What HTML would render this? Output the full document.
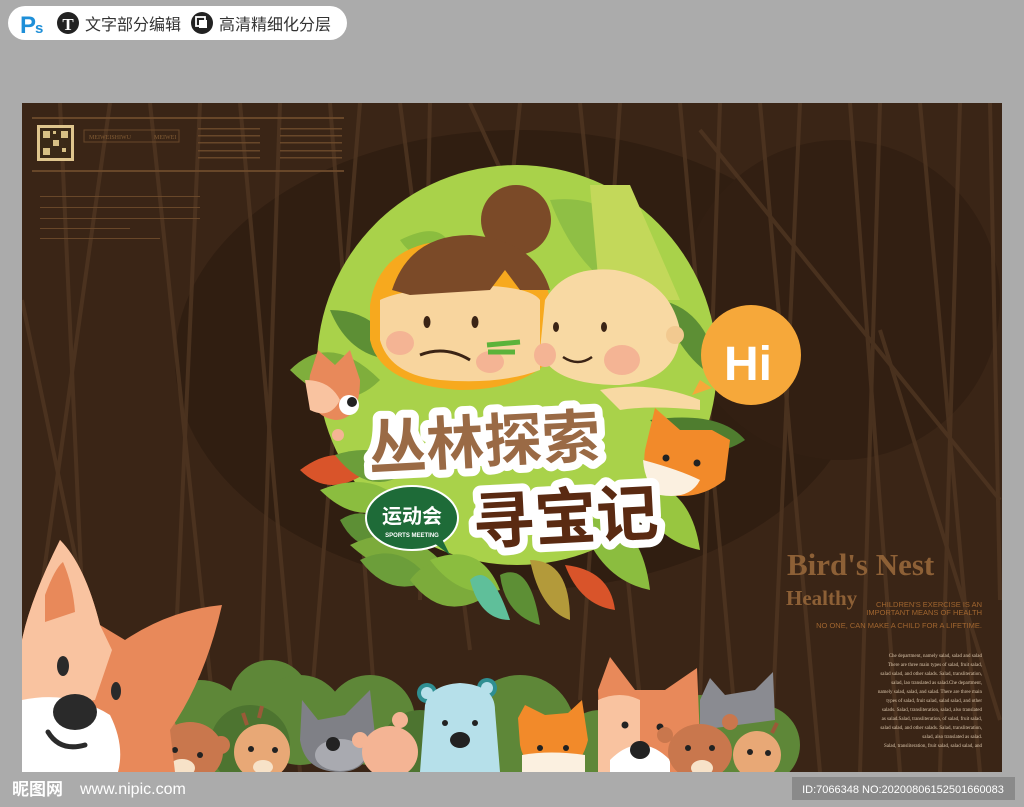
<!DOCTYPE html>
<html><head><meta charset="utf-8"><style>
html,body{margin:0;padding:0;width:1024px;height:807px;overflow:hidden;background:#ababab;font-family:"Liberation Sans","Noto Sans CJK SC",sans-serif}
</style></head><body>
<svg width="1024" height="807" viewBox="0 0 1024 807" xmlns="http://www.w3.org/2000/svg" style="position:absolute;left:0;top:0">
<rect x="8" y="6" width="339" height="34" rx="17" fill="#fff"/>
<text x="20" y="33" font-family="Liberation Sans,sans-serif" font-weight="bold" font-size="24" fill="#1e8fd8">P</text>
<text x="35" y="33" font-family="Liberation Sans,sans-serif" font-weight="bold" font-size="15" fill="#1e8fd8">s</text>
<circle cx="68" cy="23" r="11" fill="#222"/>
<text x="68" y="30" text-anchor="middle" font-family="Liberation Serif,serif" font-weight="bold" font-size="17" fill="#fff">T</text>
<text x="85" y="30" font-family="Noto Sans CJK SC,sans-serif" font-size="16" fill="#333">文字部分编辑</text>
<circle cx="202" cy="23" r="11" fill="#222"/>
<rect x="196" y="17" width="9" height="9" fill="none" stroke="#fff" stroke-width="1.8"/>
<rect x="199" y="20" width="8" height="8" fill="#fff"/>
<text x="219" y="30" font-family="Noto Sans CJK SC,sans-serif" font-size="16" fill="#333">高清精细化分层</text>

<defs><clipPath id="pc"><rect x="22" y="103" width="980" height="669"/></clipPath></defs>
<g clip-path="url(#pc)">
<rect x="22" y="103" width="980" height="669" fill="#3a2516"/>
<ellipse cx="520" cy="360" rx="345" ry="230" fill="#301e11"/>
<circle cx="840" cy="300" r="160" fill="#321f12"/>
<g stroke="#4e3521" stroke-width="4" opacity="0.85">
<line x1="60" y1="103" x2="90" y2="772"/><line x1="110" y1="103" x2="40" y2="600"/><line x1="150" y1="103" x2="220" y2="772"/>
<line x1="200" y1="103" x2="170" y2="772"/><line x1="240" y1="103" x2="300" y2="772"/><line x1="280" y1="103" x2="260" y2="700"/>
<line x1="330" y1="103" x2="380" y2="772"/><line x1="360" y1="103" x2="310" y2="720"/><line x1="400" y1="103" x2="470" y2="650"/>
<line x1="430" y1="103" x2="420" y2="600"/><line x1="470" y1="103" x2="560" y2="300"/><line x1="520" y1="103" x2="500" y2="300"/>
<line x1="580" y1="103" x2="640" y2="700"/><line x1="620" y1="103" x2="580" y2="700"/><line x1="680" y1="103" x2="740" y2="772"/>
<line x1="720" y1="103" x2="700" y2="700"/><line x1="760" y1="103" x2="820" y2="772"/><line x1="800" y1="103" x2="770" y2="772"/>
<line x1="850" y1="103" x2="900" y2="772"/><line x1="880" y1="103" x2="860" y2="772"/><line x1="920" y1="103" x2="980" y2="772"/>
<line x1="960" y1="103" x2="940" y2="772"/><line x1="990" y1="103" x2="1000" y2="600"/><line x1="22" y1="300" x2="120" y2="772"/>
<line x1="880" y1="330" x2="1000" y2="720"/><line x1="700" y1="130" x2="1000" y2="500"/>
</g>
<g fill="#6e4b2c" opacity="0.9">
<rect x="32" y="117" width="312" height="2"/><rect x="32" y="170" width="312" height="2"/>
<rect x="37" y="125" width="37" height="36" fill="#f1d79a"/>
<rect x="40" y="128" width="31" height="30" fill="#3a2a18"/>
<g fill="#e8d090"><rect x="43" y="131" width="7" height="7"/><rect x="61" y="131" width="7" height="7"/><rect x="43" y="148" width="7" height="7"/><rect x="53" y="140" width="6" height="6"/><rect x="62" y="148" width="4" height="4"/><rect x="53" y="131" width="3" height="3"/></g>
<rect x="84" y="130" width="95" height="12" fill="none" stroke="#6e4b2c"/>
<text x="89" y="139" font-size="6" font-family="Liberation Serif,serif" fill="#8a6238">MEIWEISHIWU</text>
<text x="154" y="139" font-size="6" font-family="Liberation Serif,serif" fill="#8a6238">MEIWEI</text>
<rect x="198" y="128" width="62" height="1.5"/><rect x="198" y="135" width="62" height="1.5"/><rect x="198" y="142" width="62" height="1.5"/>
<rect x="198" y="150" width="62" height="1.5"/><rect x="198" y="157" width="62" height="1.5"/>
<rect x="280" y="128" width="62" height="1.5"/><rect x="280" y="135" width="62" height="1.5"/><rect x="280" y="142" width="62" height="1.5"/>
<rect x="280" y="150" width="62" height="1.5"/><rect x="280" y="157" width="62" height="1.5"/>
<rect x="40" y="196" width="160" height="1"/><rect x="40" y="207" width="160" height="1"/><rect x="40" y="218" width="160" height="1"/>
<rect x="40" y="228" width="90" height="1"/><rect x="40" y="238" width="120" height="1"/>
</g>

<text x="787" y="575" font-family="Liberation Serif,serif" font-weight="bold" font-size="31" fill="#8d6036">Bird's Nest</text>
<text x="786" y="605" font-family="Liberation Serif,serif" font-weight="bold" font-size="21" fill="#8d6036">Healthy</text>
<g font-family="Liberation Sans,sans-serif" font-size="7.5" fill="#a0652f" text-anchor="end">
<text x="982" y="607">CHILDREN'S EXERCISE IS AN</text>
<text x="982" y="615">IMPORTANT MEANS OF HEALTH</text>
<text x="982" y="628">NO ONE, CAN MAKE A CHILD FOR A LIFETIME.</text>
</g>
<g font-family="Liberation Serif,serif" font-size="5" fill="#d9c4aa" text-anchor="end">
<text x="982" y="657">Che department, namely salad, salad and salad</text>
<text x="982" y="666">There are three main types of salad, fruit salad,</text>
<text x="982" y="675">salad salad, and other salads. Salad, transliteration,</text>
<text x="982" y="684">salad, lao translated as salad.Che department,</text>
<text x="982" y="693">namely salad, salad, and salad. There are three main</text>
<text x="982" y="702">types of salad, fruit salad, salad salad, and other</text>
<text x="982" y="711">salads. Salad, transliteration, salad, also translated</text>
<text x="982" y="720">as salad.Salad, transliteration, of salad, fruit salad,</text>
<text x="982" y="729">salad salad, and other salads. Salad, transliteration,</text>
<text x="982" y="738">salad, also translated as salad.</text>
<text x="982" y="747">Salad, transliteration, fruit salad, salad salad, and</text>
</g>

<circle cx="517" cy="365" r="200" fill="#a9d24a"/>
<g>
<path d="M290 370 Q330 330 380 380 Q340 420 290 370Z" fill="#7fae3c"/>
<path d="M300 470 Q340 440 370 470 Q330 500 300 470Z" fill="#d9542a"/>
<path d="M320 490 Q370 470 400 500 Q360 530 320 490Z" fill="#8bbd3f"/>
<path d="M335 455 Q380 440 410 470 Q370 500 335 455Z" fill="#6c9e3a"/>
<path d="M340 520 Q370 500 400 540 Q360 560 340 520Z" fill="#5d8f35"/>
<path d="M350 545 Q400 520 440 560 Q400 590 350 545Z" fill="#7cab3b"/>
<path d="M360 560 Q400 540 430 580 Q390 600 360 560Z" fill="#6c9e3a"/>
<path d="M410 580 Q440 540 480 600 Q440 620 410 580Z" fill="#7cab3b"/>
<path d="M430 560 Q480 540 500 590 Q460 600 430 560Z" fill="#8bbd3f"/>
<path d="M470 580 Q490 560 510 620 Q480 620 470 580Z" fill="#5fbf9a"/>
<path d="M500 575 Q530 560 540 625 Q505 615 500 575Z" fill="#5d8f35"/>
<path d="M530 560 Q570 560 570 620 Q540 610 530 560Z" fill="#b39a3a"/>
<path d="M565 565 Q610 570 615 610 Q580 605 565 565Z" fill="#d9542a"/>
<path d="M580 520 Q640 510 650 590 Q600 580 580 520Z" fill="#8bbd3f"/>
<path d="M630 480 Q690 480 700 550 Q650 540 630 480Z" fill="#98c640"/>
<path d="M650 420 Q720 410 745 440 Q700 470 650 420Z" fill="#4f7d2f"/>
<path d="M660 300 Q710 310 720 380 Q680 360 660 300Z" fill="#5d8f35"/>
<path d="M550 200 Q640 190 640 300 Q580 280 550 200Z" fill="#8fbf45"/>
<path d="M590 185 L630 185 L680 300 L600 300Z" fill="#c3d85a"/>
<path d="M330 310 Q380 310 400 360 Q350 360 330 310Z" fill="#5d8f35"/>
<path d="M400 240 Q440 220 450 245 Q420 270 400 240Z" fill="#8bbd3f"/>
</g>
<circle cx="516" cy="220" r="35" fill="#7b4a28"/>
<path d="M370 305 Q380 240 460 240 Q540 240 550 300 L550 360 Q520 390 460 390 Q380 385 370 340Z" fill="#f7a91e"/>
<path d="M380 300 Q400 290 460 285 Q530 285 540 300 L540 370 Q500 385 440 380 Q390 375 380 340Z" fill="#f8d59e"/>
<path d="M392 290 Q410 235 470 235 Q535 240 550 290 L520 290 L505 270 L490 290 L410 295Z" fill="#7b4a28"/>
<ellipse cx="427" cy="322" rx="3.5" ry="6" fill="#3b2415"/>
<ellipse cx="475" cy="322" rx="3.5" ry="6" fill="#3b2415"/>
<path d="M420 355 Q445 345 470 360" stroke="#3b2415" stroke-width="3" fill="none"/>
<ellipse cx="400" cy="343" rx="14" ry="12" fill="#f4b494"/>
<ellipse cx="490" cy="362" rx="14" ry="11" fill="#f4b494"/>
<path d="M487 345 L520 342 M488 352 L515 352" stroke="#5bb33a" stroke-width="5"/>
<path d="M545 300 Q565 265 615 270 Q670 280 680 330 Q680 380 620 385 Q550 385 540 350Z" fill="#f8d9a3"/>
<circle cx="675" cy="335" r="9" fill="#f2c990"/>
<ellipse cx="556" cy="327" rx="3" ry="5" fill="#3b2415"/>
<ellipse cx="604" cy="327" rx="3" ry="5" fill="#3b2415"/>
<path d="M563 357 Q578 367 592 357" stroke="#3b2415" stroke-width="2.5" fill="none"/>
<ellipse cx="545" cy="355" rx="11" ry="12" fill="#f4b494"/>
<ellipse cx="622" cy="360" rx="18" ry="15" fill="#f4b494"/>
<path d="M600 390 Q650 380 700 400 L700 410 Q650 405 620 410Z" fill="#f8d9a3"/>
<circle cx="751" cy="355" r="50" fill="#f6a83a"/>
<path d="M700 380 L692 395 L712 388Z" fill="#f6a83a"/>
<text x="748" y="380" text-anchor="middle" font-family="Liberation Sans,sans-serif" font-weight="bold" font-size="48" fill="#fff">Hi</text>
<path d="M310 375 L318 350 L335 365 L350 350 L360 380 Q360 420 335 420 Q305 415 310 375Z" fill="#e8895a"/>
<path d="M305 380 Q330 380 340 400 Q330 420 310 410Z" fill="#f9c3a0"/>
<circle cx="349" cy="405" r="10" fill="#fff"/><circle cx="352" cy="402" r="5" fill="#222"/>
<circle cx="338" cy="435" r="6" fill="#f4b494"/>
<path d="M645 450 L655 408 L680 430 L712 430 L730 440 L725 480 Q700 500 670 495 Q640 485 645 450Z" fill="#f28a2a"/>
<path d="M643 460 Q680 470 700 480 Q690 500 660 495 Q645 485 643 460Z" fill="#fbf0e0"/>
<circle cx="666" cy="458" r="3.5" fill="#222"/><circle cx="697" cy="463" r="3.5" fill="#222"/>
<g font-family="Noto Sans CJK SC,WenQuanYi Zen Hei,sans-serif" font-weight="bold" stroke="#fff" stroke-linejoin="round" paint-order="stroke">
<text x="368" y="462" font-size="58" fill="#9a6a45" stroke-width="16" transform="rotate(-3 490 440)">丛林探索</text>
<text x="472" y="540" font-size="62" fill="#5a2a12" stroke-width="16" transform="rotate(-3 550 510)">寻宝记</text>
</g>
<ellipse cx="412" cy="518" rx="46" ry="32" fill="#1e6b38" stroke="#fff" stroke-width="2"/>
<path d="M430 540 L450 555 L440 535Z" fill="#1e6b38"/>
<text x="412" y="523" text-anchor="middle" font-family="Noto Sans CJK SC,sans-serif" font-weight="bold" font-size="20" fill="#fff">运动会</text>
<text x="412" y="537" text-anchor="middle" font-family="Liberation Sans,sans-serif" font-weight="bold" font-size="6" fill="#fff">SPORTS MEETING</text>

<g fill="#5e8738">
<circle cx="200" cy="730" r="50"/><circle cx="270" cy="700" r="40"/><circle cx="300" cy="720" r="45"/>
<circle cx="370" cy="720" r="45"/><circle cx="520" cy="730" r="55"/><circle cx="600" cy="750" r="40"/>
<circle cx="700" cy="740" r="45"/><circle cx="760" cy="745" r="40"/>
</g>
<g fill="#4d7430"><circle cx="250" cy="745" r="40"/><circle cx="420" cy="750" r="40"/><circle cx="660" cy="760" r="40"/></g>
<circle cx="167" cy="727" r="9" fill="#c9774d"/><circle cx="221" cy="745" r="9" fill="#c9774d"/>
<ellipse cx="190" cy="752" rx="33" ry="30" fill="#c9774d"/>
<ellipse cx="182" cy="768" rx="13" ry="9" fill="#f7e2c8"/>
<circle cx="175" cy="750" r="3" fill="#222"/><circle cx="200" cy="755" r="3" fill="#222"/>
<path d="M247 725 l-4 -12 M259 718 l3 -12" stroke="#9a5a38" stroke-width="4"/>
<ellipse cx="262" cy="752" rx="28" ry="28" fill="#e8a876"/>
<ellipse cx="263" cy="767" rx="10" ry="7" fill="#f7e2c8"/>
<circle cx="251" cy="749" r="3" fill="#222"/><circle cx="275" cy="750" r="3" fill="#222"/>
<path d="M302 700 L318 720 L345 715 L370 690 L375 735 Q370 772 340 772 Q305 772 300 740Z" fill="#7f8086"/>
<ellipse cx="340" cy="755" rx="25" ry="16" fill="#a9aab0"/>
<circle cx="333" cy="744" r="7" fill="#222"/>
<circle cx="360" cy="740" r="8" fill="#f4b494"/><circle cx="400" cy="720" r="8" fill="#f4b494"/>
<ellipse cx="390" cy="752" rx="28" ry="26" fill="#f4b494"/>
<circle cx="427" cy="693" r="10" fill="#2f8f92"/><circle cx="487" cy="688" r="10" fill="#2f8f92"/>
<circle cx="427" cy="693" r="6" fill="#b6e0ea"/><circle cx="487" cy="688" r="6" fill="#b6e0ea"/>
<path d="M425 705 Q430 685 460 683 Q495 685 495 710 L500 772 L420 772Z" fill="#b6e0ea"/>
<circle cx="445" cy="723" r="3" fill="#222"/><circle cx="475" cy="723" r="3" fill="#222"/>
<ellipse cx="460" cy="740" rx="10" ry="8" fill="#222"/>
<path d="M518 718 L525 705 L545 715 L568 713 L582 700 L588 740 Q580 772 555 772 Q525 772 520 745Z" fill="#f28a2a"/>
<path d="M522 755 Q550 750 585 755 L585 772 L522 772Z" fill="#fbf0e0"/>
<circle cx="540" cy="748" r="3" fill="#222"/><circle cx="566" cy="748" r="3" fill="#222"/>
<path d="M700 700 L710 678 L725 695 L755 690 L773 672 L775 720 L700 730Z" fill="#8a8b91"/>
<path d="M598 690 L610 657 L635 690 L665 690 L697 668 L700 740 L700 772 L600 772Z" fill="#e8895a"/>
<path d="M598 700 Q620 690 640 700 L640 772 L598 772Z" fill="#f9c3a0"/>
<path d="M610 760 Q640 730 670 760 L670 772 L610 772Z" fill="#fff"/>
<ellipse cx="640" cy="750" rx="10" ry="9" fill="#222"/>
<circle cx="625" cy="725" r="3.5" fill="#222"/><circle cx="660" cy="727" r="3.5" fill="#222"/>
<circle cx="665" cy="735" r="8" fill="#c9774d"/><circle cx="730" cy="722" r="8" fill="#c9774d"/>
<ellipse cx="700" cy="752" rx="32" ry="28" fill="#c9774d"/>
<ellipse cx="702" cy="768" rx="11" ry="8" fill="#f7e2c8"/>
<circle cx="688" cy="748" r="3" fill="#222"/><circle cx="712" cy="748" r="3" fill="#222"/>
<ellipse cx="757" cy="755" rx="24" ry="24" fill="#e8a876"/>
<path d="M772 733 l5 -10" stroke="#9a5a38" stroke-width="4"/>
<circle cx="750" cy="752" r="3" fill="#222"/><circle cx="768" cy="753" r="3" fill="#222"/>
<!-- big corgi -->
<path d="M22 640 Q30 600 60 540 Q85 565 100 625 L125 640 Q170 610 222 605 Q205 680 170 730 L175 772 L22 772Z" fill="#e8895a"/>
<path d="M22 640 Q30 600 60 540 Q85 565 100 625 L112 650 L95 700 L22 710Z" fill="#f9c3a0"/>
<path d="M45 595 Q55 568 63 562 Q73 585 75 612 L45 622Z" fill="#e8895a"/>
<path d="M22 700 Q70 690 110 715 Q125 745 118 772 L22 772Z" fill="#fff"/>
<ellipse cx="63" cy="666" rx="6" ry="10" fill="#2a2a2a"/>
<ellipse cx="116" cy="691" rx="5" ry="9" fill="#2a2a2a"/>
<ellipse cx="75" cy="712" rx="22" ry="18" fill="#2a2a2a"/>
<path d="M48 732 Q60 752 85 745" stroke="#2a2a2a" stroke-width="5" fill="none" stroke-linecap="round"/>
</g>

<text x="12" y="795" font-family="Noto Sans CJK SC,sans-serif" font-weight="bold" font-size="17" fill="#fff">昵图网</text>
<text x="80" y="794" font-family="Liberation Sans,sans-serif" font-size="16" fill="#fff">www.nipic.com</text>
<rect x="792" y="777" width="223" height="23" fill="#8a8a8a"/>
<text x="903" y="793" text-anchor="middle" font-family="Liberation Sans,sans-serif" font-size="11" fill="#fff">ID:7066348 NO:20200806152501660083</text>
</svg>
</body></html>
